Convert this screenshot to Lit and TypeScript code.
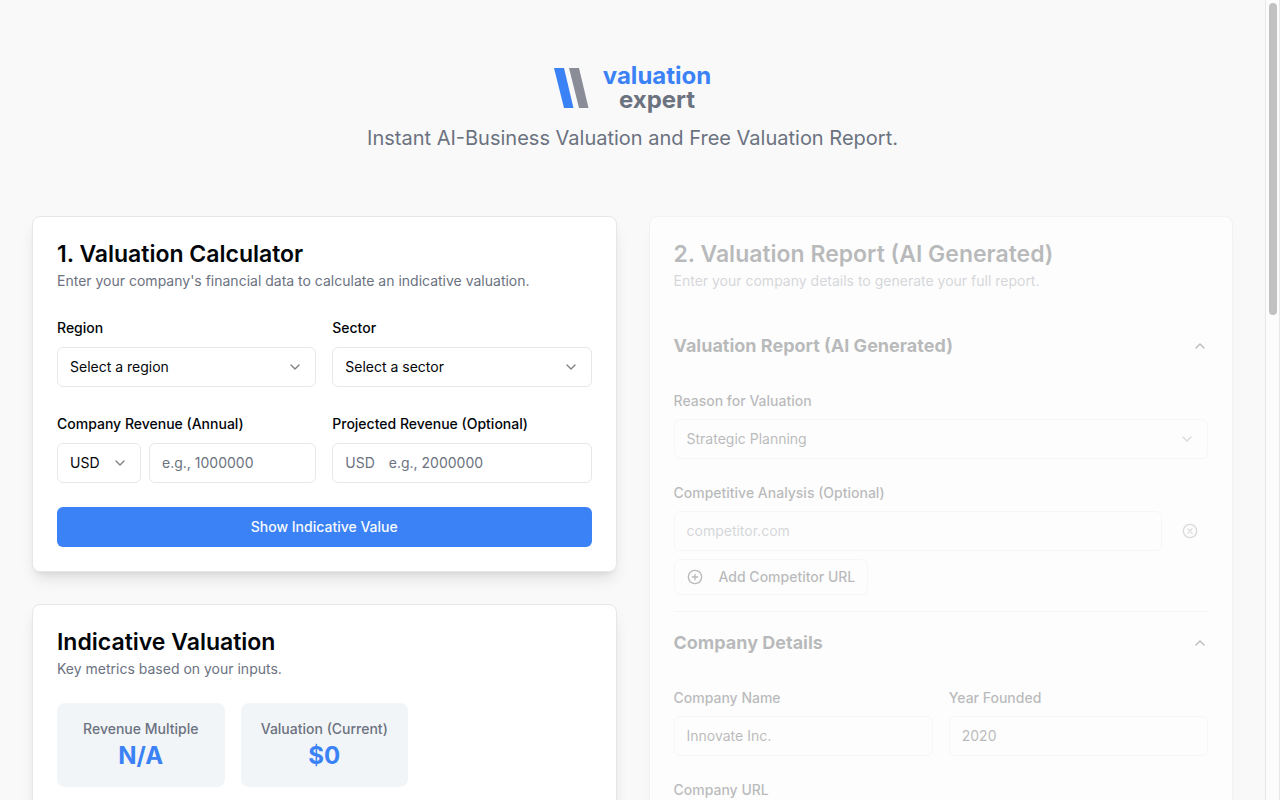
import { LitElement, html, css, svg } from "lit";
import { customElement } from "lit/decorators.js";

const icon = (shape: unknown, cls = "icon") => html`
  <svg class=${cls} viewBox="0 0 24 24" fill="none" stroke="currentColor" stroke-width="2"
    stroke-linecap="round" stroke-linejoin="round" aria-hidden="true">${shape}</svg>`;

const chevronDown = svg`<path d="m6 9 6 6 6-6" />`;
const chevronUp = svg`<path d="m18 15-6-6-6 6" />`;
const circlePlus = svg`<circle cx="12" cy="12" r="10" /><path d="M8 12h8M12 8v8" />`;
const circleX = svg`<circle cx="12" cy="12" r="10" /><path d="m15 9-6 6M9 9l6 6" />`;

@customElement("app-root")
export class AppRoot extends LitElement {
  static styles = css`
    :host {
      display: grid;
      grid-template-columns: minmax(0, 1fr) 15px;
      height: 100vh;
      overflow: hidden;
      background: #f9f9f9;
      color: #020509;
      font-family: Inter, "Liberation Sans", sans-serif;
      font-size: 14px;
      line-height: 20px;
    }
    *, *::before, *::after { box-sizing: border-box; }
    .page { overflow-y: auto; scrollbar-width: none; padding: 64px 32px; }
    .rail {
      background: #fcfcfc;
      border: solid #e8e8e8;
      border-width: 0 1px;
      padding: 3px;
    }
    .thumb { width: 8px; height: 39vh; border-radius: 4px; background: #c1c1c1; }

    .masthead { display: flex; flex-direction: column; align-items: center; gap: 12px; margin-bottom: 64px; }
    .brand { display: flex; align-items: center; gap: 14px; text-decoration: none; }
    .mark { width: 35px; height: 40px; display: block; }
    .name { text-align: center; font-size: 24px; line-height: 24px; font-weight: 700; color: #6b7280; }
    .name span { display: block; }
    .name .lead { color: #3b82f6; }
    .tagline { margin: 0; font-size: 20px; line-height: 28px; color: #6b7280; }

    .columns { display: grid; grid-template-columns: repeat(2, minmax(0, 1fr)); gap: 32px; align-items: start; }
    .stack { display: grid; gap: 32px; }
    .card {
      background: #fff;
      border: 1px solid #e5e7eb;
      border-radius: 8px;
      padding: 24px;
      box-shadow: 0 10px 15px -3px rgba(0, 0, 0, 0.1), 0 4px 6px -4px rgba(0, 0, 0, 0.1);
    }
    .card.locked {
      background: #fdfdfd;
      border-color: #f2f2f3;
      box-shadow: 0 10px 15px -3px rgba(0, 0, 0, 0.03), 0 4px 6px -4px rgba(0, 0, 0, 0.03);
    }
    .locked > * { opacity: 0.27; }
    .title { margin: 0 0 4px; font-size: 23px; line-height: 26px; font-weight: 600; }
    .hint { margin: 0 0 24px; color: #6b7280; }

    .pair { display: grid; grid-template-columns: repeat(2, minmax(0, 1fr)); gap: 24px 16px; }
    .field { display: grid; gap: 8px; min-width: 0; }
    .label { font-weight: 500; }
    .tall .field { gap: 6px; }
    .tall .label { line-height: 26px; }
    .row { display: flex; gap: 8px; align-items: center; }
    .pick { display: grid; flex: 1; min-width: 0; align-items: center; }
    .pick.currency { flex: 0 0 84px; }
    .pick > * { grid-area: 1 / 1; }
    .pick .icon { justify-self: end; margin-right: 13px; opacity: 0.5; pointer-events: none; }
    .control {
      width: 100%;
      min-width: 0;
      height: 40px;
      margin: 0;
      padding: 0 12px;
      border: 1px solid #e5e7eb;
      border-radius: 6px;
      background: transparent;
      color: inherit;
      font: inherit;
      appearance: none;
      opacity: 1;
    }
    input.control { padding-bottom: 2px; }
    .control::placeholder, .bare::placeholder { color: #6b7280; opacity: 1; }
    .prefixed { display: flex; align-items: center; gap: 14px; }
    .unit { color: #6b7280; }
    .bare { flex: 1; min-width: 0; border: 0; padding: 0; background: none; font: inherit; color: inherit; outline: 0; }
    .primary {
      width: 100%;
      height: 40px;
      margin-top: 24px;
      border: 0;
      border-radius: 6px;
      background: #3b82f6;
      color: #f8fafc;
      font: inherit;
      font-weight: 500;
    }
    .icon { width: 16px; height: 16px; display: block; flex: none; }

    .metrics { display: grid; grid-template-columns: repeat(3, minmax(0, 1fr)); gap: 16px; margin: 0; }
    .metric { background: #f2f5f7; border-radius: 8px; padding: 16px 16px 14px; text-align: center; }
    .metric dt { color: #6b7280; font-weight: 500; }
    .metric dd { margin: 0; color: #3b82f6; font-size: 24px; line-height: 34px; font-weight: 700; }

    .section + .section { border-top: 1px solid #e5e7eb; }
    .section-title { margin: 0; }
    .trigger {
      display: flex;
      justify-content: space-between;
      align-items: center;
      width: 100%;
      padding: 16px 0 14px;
      border: 0;
      background: none;
      color: inherit;
      font: inherit;
      font-size: 18px;
      line-height: 30px;
      font-weight: 700;
    }
    .body { display: grid; gap: 24px; padding: 16px 0; }
    .competitor { gap: 10px; }
    .remove {
      display: grid;
      place-items: center;
      width: 36px;
      height: 36px;
      flex: none;
      border: 0;
      padding: 0;
      background: none;
      color: inherit;
      opacity: 0.5;
    }
    .add {
      display: flex;
      align-items: center;
      gap: 16px;
      justify-self: start;
      height: 36px;
      padding: 0 12px;
      border: 1px solid #e5e7eb;
      border-radius: 6px;
      background: transparent;
      color: inherit;
      font: inherit;
      font-weight: 500;
    }
  `;

  private select(id: string, value: string, label: string, cls = "") {
    return html`<div class="pick ${cls}">
      <select class="control" id=${id} aria-label=${label}><option>${value}</option></select>
      ${icon(chevronDown)}
    </div>`;
  }

  private calculator() {
    return html`<section class="card">
      <h2 class="title">1. Valuation Calculator</h2>
      <p class="hint">Enter your company's financial data to calculate an indicative valuation.</p>
      <form @submit=${(e: Event) => e.preventDefault()}>
        <div class="pair tall">
          <div class="field">
            <label class="label" for="region">Region</label>
            ${this.select("region", "Select a region", "Region")}
          </div>
          <div class="field">
            <label class="label" for="sector">Sector</label>
            ${this.select("sector", "Select a sector", "Sector")}
          </div>
          <div class="field">
            <label class="label" for="revenue">Company Revenue (Annual)</label>
            <div class="row">
              ${this.select("currency", "USD", "Currency", "currency")}
              <input class="control" id="revenue" inputmode="numeric" placeholder="e.g., 1000000" />
            </div>
          </div>
          <div class="field">
            <label class="label" for="projected">Projected Revenue (Optional)</label>
            <div class="control prefixed">
              <span class="unit">USD</span>
              <input class="bare" id="projected" inputmode="numeric" placeholder="e.g., 2000000" />
            </div>
          </div>
        </div>
        <button class="primary" type="submit">Show Indicative Value</button>
      </form>
    </section>`;
  }

  private indicative() {
    return html`<section class="card">
      <h2 class="title">Indicative Valuation</h2>
      <p class="hint">Key metrics based on your inputs.</p>
      <dl class="metrics">
        <div class="metric"><dt>Revenue Multiple</dt><dd>N/A</dd></div>
        <div class="metric"><dt>Valuation (Current)</dt><dd>$0</dd></div>
      </dl>
    </section>`;
  }

  private report() {
    return html`<section class="card locked">
      <h2 class="title">2. Valuation Report (AI Generated)</h2>
      <p class="hint">Enter your company details to generate your full report.</p>
      <div class="section">
        <h3 class="section-title">
          <button class="trigger" type="button" aria-expanded="true">Valuation Report (AI Generated) ${icon(chevronUp)}</button>
        </h3>
        <div class="body">
          <div class="field">
            <label class="label" for="reason">Reason for Valuation</label>
            ${this.select("reason", "Strategic Planning", "Reason for Valuation")}
          </div>
          <div class="field">
            <label class="label" for="competitor">Competitive Analysis (Optional)</label>
            <div class="row competitor">
              <input class="control" id="competitor" placeholder="competitor.com" />
              <button class="remove" type="button" aria-label="Remove competitor">${icon(circleX)}</button>
            </div>
            <button class="add" type="button">${icon(circlePlus)}<span>Add Competitor URL</span></button>
          </div>
        </div>
      </div>
      <div class="section">
        <h3 class="section-title">
          <button class="trigger" type="button" aria-expanded="true">Company Details ${icon(chevronUp)}</button>
        </h3>
        <div class="body">
          <div class="pair">
            <div class="field">
              <label class="label" for="company">Company Name</label>
              <input class="control" id="company" value="Innovate Inc." />
            </div>
            <div class="field">
              <label class="label" for="founded">Year Founded</label>
              <input class="control" id="founded" value="2020" />
            </div>
          </div>
          <div class="field">
            <label class="label" for="url">Company URL</label>
            <input class="control" id="url" type="url" />
          </div>
        </div>
      </div>
    </section>`;
  }

  render() {
    return html`
      <main class="page">
        <header class="masthead">
          <a class="brand" href="#">
            <svg class="mark" viewBox="0 0 35 40" aria-hidden="true">
              <polygon points="0,0 10,0 19.5,40 10,40" fill="#3b82f6" />
              <polygon points="15,0 25,0 34.5,40 25,40" fill="#8a8d98" />
            </svg>
            <span class="name"><span class="lead">valuation</span><span>expert</span></span>
          </a>
          <p class="tagline">Instant AI-Business Valuation and Free Valuation Report.</p>
        </header>
        <div class="columns">
          <div class="stack">${this.calculator()} ${this.indicative()}</div>
          ${this.report()}
        </div>
      </main>
      <div class="rail" aria-hidden="true"><div class="thumb"></div></div>
    `;
  }
}
